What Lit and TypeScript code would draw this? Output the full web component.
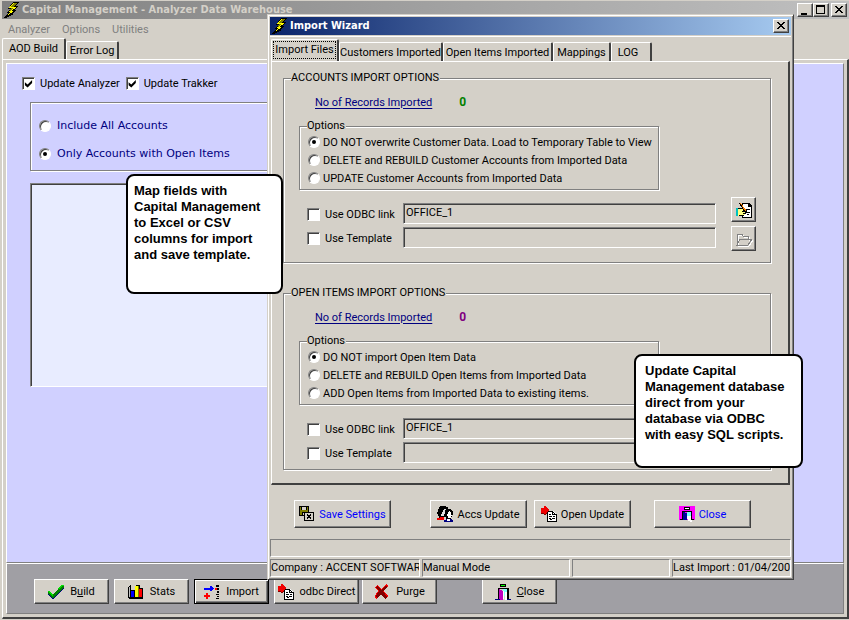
import { LitElement, html, css, svg, nothing } from "lit";
import { customElement, property } from "lit/decorators.js";

const bolt = svg`
  <path d="M9 0h6l-3 4h3l-5 4h3l-5 4h2L2 16H0l4-5H2l4-4H4z" fill="#000"/>
  <path d="M9 1h4L9 5h4L7 9h3l-9 6 5-5H4l4-4H5z" fill="#ffff00"/>
  <path d="M10 1h3l-4 4H7zM5 8l2-2h2L6 9z" fill="#808000"/>`;
const sheet = svg`
  <path d="M6 5h6l4 4v7H6z" fill="#fff"/>
  <path d="M6 5h6v1H6zM6 5h1v11H6zM6 15h10v1H6zM15 8h1v8h-1zM11 5h1v4h-1zM12 6h1v1h-1zM13 7h1v1h-1zM14 8h1v1h-1zM11 8h4v1h-4z"/>
  <path d="M8 8h2v1H8zM8 10h3v1H8zM12 10h2v1h-2zM8 12h2v1H8zM11 12h3v1h-3zM8 14h1v-1h2v1z"/>
  <path d="M0 2h3V0h2v1h1v1h1v1h1v2H7v1H6v1H5v1H3V7H0z" fill="#f00000"/>
  <path d="M0 7h3v1H0zM5 7h1v1H5zM3 8h2v1H3z" fill="#800000"/>`;

const icons: Record<string, unknown> = {
  bolt,
  sheet,
  min: svg`<path d="M4 11h6v2H4z"/>`,
  max: svg`<path d="M3 3h9v9H3zM4 5v6h7V5z" fill-rule="evenodd"/>`,
  close: svg`<path d="M4 4h2v1h1v1h2V5h1V4h2v1h-1v1h-1v1H9v1h1v1h1v1h1v1h-2v-1H9V9H7v1H6v1H4v-1h1V9h1V8h1V7H6V6H5V5H4z"/>`,
  check: svg`
    <path d="M0 8h2l3 3L14 1h2v3L6 15H4L0 11z" fill="#000080"/>
    <path d="M0 7h2l3 4L14 1h2v2L6 14H4L0 10z" fill="#008000"/>
    <path d="M0 7h2l3 4v1H4L0 8zM13 1h3v1h-2l-3 3h-1z" fill="#00e000"/>`,
  stats: svg`
    <path d="M0 4l3-4v12l-1 1h13v2H1l-1-1z"/>
    <path d="M1 4l1-2v10l-1 1z" fill="#c0c0c0"/>
    <path d="M2 7l1-1h4v9H2z"/><path d="M3 7h3v6H3z" fill="#0000ff"/>
    <path d="M7 2l1-1h4v12H7z"/><path d="M7 2h3v11H7z" fill="#ffff00"/><path d="M10 2h1v11h-1z" fill="#808000"/>
    <path d="M11 5l1-1h3v10h-4z"/><path d="M11 5h3v8h-3z" fill="#ff0000"/>`,
  transfer: svg`
    <path d="M0 4h6V2h2v1h1v1h1v1H9v1H8v1H6V6H0z" fill="#0000ff"/>
    <path d="M2 9h2v2h2v2H4v2H2v-2H0v-2h2z" fill="#ff0000"/>
    <path d="M11 4h2v2h-2z" fill="#ff0000"/>
    <path d="M12 1h3v2h-3zM13 4h2v2h-2zM13 7h2v2h-2zM12 10h3v1h-3zM13 12h2v1h-2zM12 14h3v1h-3z"/>`,
  cross: svg`
    <path d="M3 1l4 4 5-5 2 2-4 5 4 5-3 3-4-5-4 5-2-1V12l3-5-3-4z" fill="#ff0000"/>
    <path d="M4 2l3 4 5-5 1 2-4 4 4 6-2 2-4-5-4 4-1-2 3-5-3-4z" fill="#800000"/>`,
  door: svg`
    <path d="M5 0h6v3H5z"/><path d="M6 1h4v1H6z" fill="#00ff00"/>
    <path d="M3 4h11v12h-2V5H4v11H3z"/>
    <path d="M4 5l4 2v9H4z" fill="#c000c0"/><path d="M8 5h4v7H8z" fill="#80ffff"/><path d="M8 7h1v8H8zM10 8h2v8h-2z" fill="#fff"/>
    <path d="M0 15h5v1H0zM12 15h4v1h-4z" fill="#000080"/>`,
  exit: svg`
    <path d="M0 0h16v14H0z" fill="#ff00ff"/>
    <path d="M5 1h6v3H5z"/><path d="M6 2h4v1H6z" fill="#fff"/>
    <path d="M3 5h10v8h2v1h-3V6H4v8H1v-1h2z"/>
    <path d="M4 6l4 1v7H4z" fill="#0000a0"/><path d="M8 6h4v4H8z" fill="#80ffff"/><path d="M8 10h4v4h1v2h-2v-1H9z" fill="#fff"/>`,
  save: svg`
    <path d="M0 0h10v10H0z"/><path d="M1 1h8v8H1z" fill="#808000"/>
    <path d="M2 0h6v4H2zM3 6h5v4H3z"/><path d="M3 1h4v3H3z" fill="#d4d0c8"/><path d="M4 7h1v2H4z" fill="#d4d0c8"/>
    <path d="M5 6h10v9H5z"/><path d="M6 7h8v7H6z" fill="#d4d0c8"/>
    <path d="M8 8h1v1h2V8h1v2h-1v1h1v2h-1v-1H9v1H8v-2h1v-1H8z"/>`,
  people: svg`
    <path d="M3 0h6v1h2v2h3v1h1v1h1v4h-1v2h-1v2H9v-2H4v1H2v-2H1V8H0V6h1V3h1V1h1z"/>
    <path d="M7 3h2v1H8v4H7v2H4V8h1V6h1V4h1z" fill="#e0e0e0"/>
    <path d="M12 5h1v1h1v3h1v1h-1v2h-3v-2h-1V8h1V6h1z" fill="#fff"/>
    <path d="M0 12h3v-1h4v3H0z" fill="#f00000"/>
    <path d="M7 14h2v-1h6v1h1v2H7z" fill="#000080"/><path d="M10 13h3v2h-3z" fill="#fff"/>`,
  sign: svg`
    <path d="M7 1h6l3 3v12H6V1z"/><path d="M8 2h4v3h3v10H7V2z" fill="#fff"/>
    <path d="M12 1h1v3h3v1h-4zM10 7h4v1h-4zM11 10h3v1h-3zM9 13h2v-1h2v1z"/>
    <path d="M0 6h2v8H0z" fill="#00c0c0"/><path d="M2 7h4l1-1h2v2h2v1h-1v2h-1v2H7l-1 1H2z" fill="#ffff80"/>
    <path d="M2 6h4v1H2zM3 13h5v1H3zM6 9h4v1H6zM7 11h3v1H7z"/>
    <path d="M3 1h1l7 8v2H9z"/><path d="M4 1h1l5 7-1 1z" fill="#ff8000"/>`,
  folder: svg`
    <path d="M1 14V4l1-1h4l1 2h5v3h4l-4 6z" fill="none" stroke="#fff" transform="translate(1 1)"/>
    <path d="M1 14V4l1-1h4l1 2h5v3M1 14l3-6h12l-4 6z" fill="none" stroke="#808080"/>`,
};

const icon = (name: string) =>
  html`<svg class="icon" viewBox="0 0 16 16" aria-hidden="true" shape-rendering="crispEdges">${icons[name]}</svg>`;

const base = css`
  * { box-sizing: border-box; }
  button, input, fieldset, legend, h1, h2, p { margin: 0; padding: 0; font: inherit; color: inherit; }
  .icon { width: 16px; height: 16px; flex: none; display: block; overflow: visible; }
  .titlebar { display: flex; align-items: center; height: 18px; gap: 2px; padding: 0 2px; color: #fff; }
  .titlebar h1, .titlebar h2 {
    flex: 1; font: bold 11px/18px "DejaVu Sans Condensed", "DejaVu Sans", sans-serif; white-space: nowrap;
  }
  .btn {
    display: flex; align-items: center; justify-content: center; gap: 6px; background: #d4d0c8; white-space: nowrap;
    border: 1px solid; border-color: #fff #404040 #404040 #fff; box-shadow: inset -1px -1px 0 #808080;
  }
  .cap { width: 16px; height: 14px; }
  .tabs { display: flex; align-items: flex-end; height: 22px; }
  .tab {
    height: 19px; padding: 0; background: #d4d0c8; border: 1px solid; border-right-width: 2px;
    border-color: #fff #404040 transparent #fff; border-radius: 2px 2px 0 0; border-bottom: 0; white-space: nowrap;
  }
  .tab.on { height: 22px; padding-bottom: 2px; }
  label { display: flex; align-items: center; white-space: nowrap; }
  input[type="radio"], input[type="checkbox"] {
    appearance: none; flex: none; background: #fff; display: grid; place-items: center;
    border: 1px solid; border-color: #808080 #fff #fff #808080; box-shadow: inset 1px 1px 0 #404040;
  }
  input[type="checkbox"] { width: 13px; height: 13px; }
  input[type="radio"] { width: 12px; height: 12px; border-radius: 50%; }
  input[type="radio"]:checked::before { content: ""; width: 4px; height: 4px; border-radius: 50%; background: #000; }
  input[type="checkbox"]:checked::before {
    content: ""; width: 9px; height: 9px; background: #000;
    clip-path: polygon(10% 35%, 40% 60%, 90% 10%, 90% 45%, 40% 95%, 10% 70%);
  }
  u { text-underline-offset: 1px; }
`;

interface Section {
  id: string; title: string; tone: string; options: string[];
}

const sections: Section[] = [
  {
    id: "accounts", title: "ACCOUNTS IMPORT OPTIONS", tone: "green",
    options: [
      "DO NOT overwrite Customer Data. Load to Temporary Table to View",
      "DELETE and REBUILD Customer Accounts from Imported Data",
      "UPDATE Customer Accounts from Imported Data",
    ],
  },
  {
    id: "items", title: "OPEN ITEMS IMPORT OPTIONS", tone: "purple",
    options: [
      "DO NOT import Open Item Data",
      "DELETE and REBUILD Open Items from Imported Data",
      "ADD Open Items from Imported Data to existing items.",
    ],
  },
];

@customElement("import-section")
export class ImportSection extends LitElement {
  @property({ attribute: false }) data!: Section;

  static styles = [base, css`
    :host { display: block; }
    fieldset {
      border: 1px solid #808080; box-shadow: 1px 1px 0 #fff, inset 1px 1px 0 #fff; min-width: 0;
    }
    legend { height: 14px; line-height: 14px; background: #d4d0c8; margin-left: 7px; padding-right: 1px; }
    .group { padding-top: 9px; padding-bottom: 3px; }
    .accounts { padding-bottom: 11px; }
    .count { display: flex; align-items: center; gap: 27px; height: 16px; padding-left: 31px; }
    .count a { color: #000080; text-underline-offset: 2px; }
    .count output { font-weight: bold; font-size: 12px; }
    .green { color: #008000; }
    .purple { color: #800080; }
    .options { width: 360px; margin: 9px 0 7px 15px; padding: 0 7px 2px 8px; }
    .options legend { margin-left: -1px; }
    .options label { height: 18px; gap: 3px; }
    .sources { display: flex; gap: 15px; padding: 0 14px 0 23px; }
    .fields {
      flex: 1; display: grid; grid-template-columns: 91px 1fr; column-gap: 5px; row-gap: 3px;
      padding-top: 6px; align-content: start;
    }
    .fields label { gap: 5px; padding-top: 2px; }
    .fields input[type="text"] {
      height: 21px; width: 100%; padding: 0 2px 2px; background: #d4d0c8; outline: 0;
      border: 1px solid; border-color: #808080 #fff #fff #808080; box-shadow: inset 1px 1px 0 #404040;
    }
    .files { display: grid; gap: 4px; align-content: start; }
    .files .btn { width: 25px; height: 25px; }
  `];

  render() {
    const d = this.data;
    return html`
      <fieldset class="group ${d.id}">
        <legend>${d.title}</legend>
        <div class="count"><a href="#${d.id}">No of Records Imported</a><output class=${d.tone}>0</output></div>
        <fieldset class="options">
          <legend>Options</legend>
          ${d.options.map((o, i) => html`<label><input type="radio" name="mode" ?checked=${i === 0} />${o}</label>`)}
        </fieldset>
        <div class="sources">
          <div class="fields">
            <label><input type="checkbox" />Use ODBC link</label>
            <input type="text" aria-label="ODBC link" value="OFFICE_1" />
            <label><input type="checkbox" />Use Template</label>
            <input type="text" aria-label="Template" />
          </div>
          <div class="files">
            <button class="btn" aria-label="Edit link">${icon("sign")}</button>
            <button class="btn" aria-label="Open template" disabled>${icon("folder")}</button>
          </div>
        </div>
      </fieldset>`;
  }
}

@customElement("import-wizard")
export class ImportWizard extends LitElement {
  static styles = [base, css`
    :host {
      display: block; background: #d4d0c8; padding: 2px; color: #000;
      border: 1px solid; border-color: #d4d0c8 #404040 #404040 #d4d0c8;
      box-shadow: inset 1px 1px 0 #fff, inset -1px -1px 0 #808080;
    }
    .titlebar { background: linear-gradient(90deg, #0a246a, #a6caf0); }
    .pages { margin-top: 1px; padding: 2px 1px 0; border-top: 1px solid #fff; }
    .tab.on { width: 68px; padding-left: 1px; padding-right: 1px; }
    .tab.on span { display: block; height: 18px; line-height: 16px; border: 1px dotted #000; }
    .customers { width: 104px; }
    .items { width: 110px; }
    .mappings { width: 58px; }
    .log { width: 41px; padding-right: 6px; }
    .page {
      border: 1px solid; border-width: 1px 2px 2px 1px; border-color: #fff #404040 #404040 #fff;
      padding: 9px 17px 13px 11px; display: grid; gap: 23px;
    }
    .actions { display: flex; padding: 15px 24px 11px; }
    .actions .btn { width: 97px; height: 28px; margin-right: 7px; gap: 4px; }
    .actions .wide { margin-right: 39px; }
    .actions .mid { margin-right: 23px; }
    .blue { color: #0000ff; }
    .status { display: grid; grid-template-columns: 150px 148px 98px 1fr; gap: 2px; }
    .status p {
      height: 18px; line-height: 16px; overflow: hidden; white-space: nowrap;
      border: 1px solid; border-color: #808080 #fff #fff #808080;
    }
    .status .hint { grid-column: 1 / -1; }
  `];

  render() {
    return html`
      <div class="titlebar">${icon("bolt")}<h2>Import Wizard</h2><button class="btn cap" aria-label="Close">${icon("close")}</button></div>
      <div class="pages">
        <div class="tabs">
          <button class="tab on"><span>Import Files</span></button>
          <button class="tab customers">Customers Imported</button>
          <button class="tab items">Open Items Imported</button>
          <button class="tab mappings">Mappings</button>
          <button class="tab log">LOG</button>
        </div>
        <div class="page">
          ${sections.map((s) => html`<import-section .data=${s}></import-section>`)}
        </div>
      </div>
      <div class="actions">
        <button class="btn wide blue">${icon("save")}Save Settings</button>
        <button class="btn">${icon("people")}Accs Update</button>
        <button class="btn mid">${icon("sheet")}Open Update</button>
        <button class="btn blue">${icon("exit")}Close</button>
      </div>
      <div class="status">
        <p class="hint"></p>
        <p>Company : ACCENT SOFTWAR</p><p>Manual Mode</p><p></p><p>Last Import : 01/04/2005</p>
      </div>`;
  }
}

const tools = [
  { icon: "check", pre: "B", key: "u", post: "ild", cls: "" },
  { icon: "stats", pre: "Stats", key: "", post: "", cls: "" },
  { icon: "transfer", pre: "Import", key: "", post: "", cls: "default" },
  { icon: "sheet", pre: "odbc Direct", key: "", post: "", cls: "wide" },
  { icon: "cross", pre: "Purge", key: "", post: "", cls: "last" },
  { icon: "door", pre: "", key: "C", post: "lose", cls: "" },
];

@customElement("app-root")
export class AppRoot extends LitElement {
  static styles = [base, css`
    :host {
      display: flex; flex-direction: column; position: relative; min-height: 100vh; box-sizing: border-box;
      padding: 1px 0 1px 2px; background: #d4d0c8; color: #000; overflow: hidden;
      font: 11px/15px Roboto, "Liberation Sans", sans-serif;
    }
    .titlebar { background: linear-gradient(90deg, #808080, #c0c0c0); color: #d4d0c8; }
    .caps { display: flex; }
    .caps .last { margin-left: 2px; }
    .menu { display: flex; gap: 12px; height: 20px; padding-left: 6px; align-items: center; color: #808080; }
    .menu button { border: 0; background: none; }
    .main-tabs .tab { width: 53px; height: 18px; }
    .main-tabs .tab.on { width: 64px; height: 21px; }
    .main-tabs { height: 20px; }
    .page {
      flex: 1; display: flex; flex-direction: column; padding: 3px;
      border: 1px solid; border-width: 1px 2px 2px 1px; border-color: #fff #404040 #404040 #fff;
    }
    .body { flex: 1; background: #d0d0ff; border: 1px solid; border-color: #fff #808080 #808080 #fff; padding: 12px 20px 0 15px; }
    .checks { display: flex; gap: 6px; height: 15px; }
    .checks label { gap: 5px; }
    .scope {
      display: grid; align-content: start; gap: 10px; height: 69px; margin: 11px 0 12px 8px; padding: 14px 8px 0; width: 480px;
      border: 1px solid #808080; box-shadow: 1px 1px 0 #fff, inset 1px 1px 0 #fff;
      color: #000080; font: 11px/18px "DejaVu Sans", sans-serif;
    }
    .scope label { gap: 6px; height: 18px; }
    .list {
      width: 480px; height: 204px; margin-left: 8px; background: #e8ecff; border: 1px solid;
      border-color: #808080 #fff #fff #808080; box-shadow: inset 1px 1px 0 #404040;
    }
    .tools {
      display: flex; gap: 5px; background: #a09fa4; padding: 15px 27px 9px; border: 1px solid; border-color: #fff #808080 #808080 #fff;
    }
    .tools .btn { width: 75px; height: 25px; }
    .tools .wide { width: 85px; margin-right: -2px; }
    .tools .last { margin-right: 40px; }
    .tools .default { border-color: #000; box-shadow: inset 1px 1px 0 #fff, inset -1px -1px 0 #404040, inset -2px -2px 0 #808080; }
    .wizard { position: absolute; top: 14px; left: 267px; right: 55px; }
    .callout {
      position: absolute; background: #fff; border: 2px solid #000; border-radius: 8px; padding: 7px 6px 0;
      font: bold 13px/16px "Liberation Sans", sans-serif;
    }
    .left { top: 174px; left: 126px; width: 157px; height: 120px; }
    .right { top: 354px; right: 46px; width: 169px; height: 114px; padding-left: 9px; }
  `];

  render() {
    return html`
      <div class="titlebar">
        ${icon("bolt")}<h1>Capital Management - Analyzer Data Warehouse</h1>
        <div class="caps">
          <button class="btn cap" aria-label="Minimize">${icon("min")}</button>
          <button class="btn cap" aria-label="Maximize">${icon("max")}</button>
          <button class="btn cap last" aria-label="Close">${icon("close")}</button>
        </div>
      </div>
      <nav class="menu"><button>Analyzer</button><button>Options</button><button>Utilities</button></nav>
      <div class="tabs main-tabs"><button class="tab on">AOD Build</button><button class="tab">Error Log</button></div>
      <div class="page">
        <div class="body">
          <div class="checks">
            <label><input type="checkbox" checked />Update Analyzer</label>
            <label><input type="checkbox" checked />Update Trakker</label>
          </div>
          <div class="scope">
            <label><input type="radio" name="scope" />Include All Accounts</label>
            <label><input type="radio" name="scope" checked />Only Accounts with Open Items</label>
          </div>
          <div class="list"></div>
        </div>
        <div class="tools">
          ${tools.map((t) => html`<button class="btn ${t.cls}">${icon(t.icon)}<span>${t.pre}${t.key ? html`<u>${t.key}</u>` : nothing}${t.post}</span></button>`)}
        </div>
      </div>
      <import-wizard class="wizard"></import-wizard>
      <aside class="callout left">Map fields with<br />Capital Management<br />to Excel or CSV<br />columns for import<br />and save template.</aside>
      <aside class="callout right">Update Capital<br />Management database<br />direct from your<br />database via ODBC<br />with easy SQL scripts.</aside>`;
  }
}
